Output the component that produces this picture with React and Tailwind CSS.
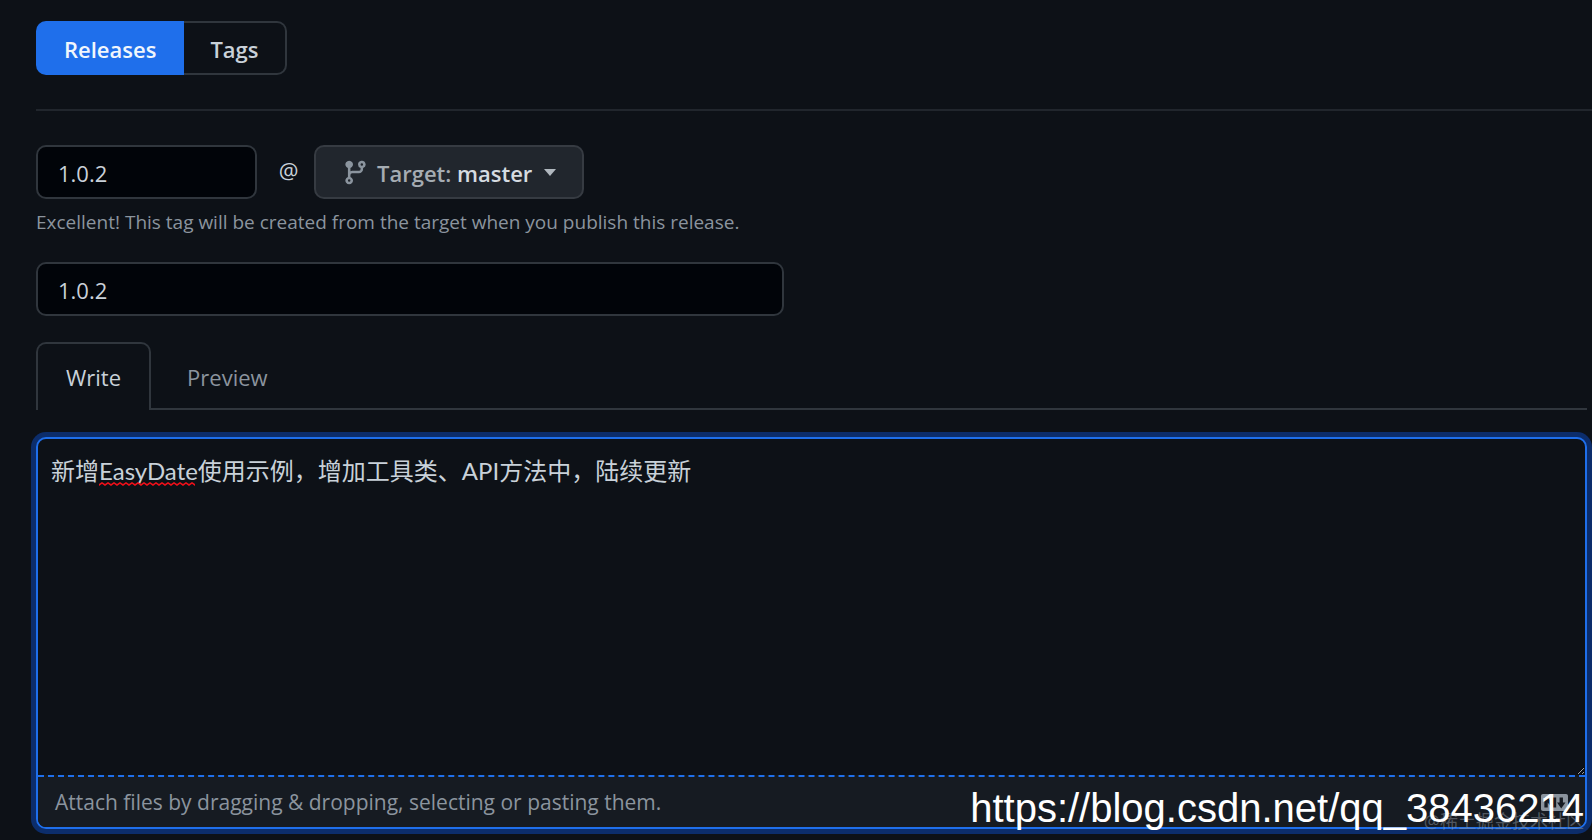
import React, { useState } from 'react';

const BranchIcon = () => (
  <svg viewBox="0 0 16 16" width="27" height="27" fill="currentColor" aria-hidden="true" className="shrink-0">
    <path d="M11.75 2.5a.75.75 0 100 1.5.75.75 0 000-1.5zm-2.25.75a2.25 2.25 0 113 2.122V6A2.5 2.5 0 0110 8.5H6a1 1 0 00-1 1v1.128a2.251 2.251 0 11-1.5 0V5.372a2.25 2.25 0 111.5 0v1.836A2.492 2.492 0 016 7h4a1 1 0 001-1v-.628A2.25 2.25 0 019.5 3.25zM4.25 12a.75.75 0 100 1.5.75.75 0 000-1.5zM3.5 3.25a.75.75 0 111.5 0 .75.75 0 01-1.5 0z" />
  </svg>
);

const MarkdownIcon = () => (
  <svg viewBox="0 3 16 10" width="27" height="17" fill="currentColor" aria-hidden="true">
    <path fillRule="evenodd" d="M14.85 3H1.15C.52 3 0 3.52 0 4.15v7.69C0 12.48.52 13 1.15 13h13.69c.64 0 1.15-.52 1.15-1.15v-7.7C16 3.52 15.48 3 14.85 3zM9 11H7V8L5.5 9.92 4 8v3H2V5h2l1.5 2L7 5h2v6zm2.99.5L9.5 8H11V5h2v3h1.5l-2.51 3.5z" />
  </svg>
);

// Spell-check mark under "EasyDate"
const Squiggle = () => (
  <svg width="96" height="4" fill="none" stroke="#f00f19" strokeWidth="1.5" aria-hidden="true" className="absolute top-[43px] left-[61px] pointer-events-none">
    <defs>
      <pattern id="wave" width="6" height="4" patternUnits="userSpaceOnUse">
        <path d="M-1.5 2 L0 3 L3 1 L6 3 L7.5 2" />
      </pattern>
    </defs>
    <rect width="96" height="4" fill="url(#wave)" stroke="none" />
  </svg>
);

const App = () => {
  const [tag, setTag] = useState('1.0.2');
  const [title, setTitle] = useState('1.0.2');
  const [body, setBody] = useState('新增EasyDate使用示例，增加工具类、API方法中，陆续更新');

  return (
    <div className="min-h-screen bg-[#0d1117] text-[#c9d1d9] pt-[21px] pl-9 font-['Open_Sans','Noto_Sans_CJK_SC',sans-serif] text-[22px] leading-[34px] overflow-hidden">
      <nav className="flex font-semibold">
        <a href="#releases" className="h-[54px] px-7 pt-0.5 flex items-center rounded-l-[10px] bg-[#1f6feb] text-[#f0f6fc]">Releases</a>
        <a href="#tags" className="h-[54px] px-[26px] pt-0.5 flex items-center rounded-r-[10px] border-2 border-l-0 border-[#30363d]">Tags</a>
      </nav>

      <form onSubmit={(e) => e.preventDefault()} className="mt-[34px] pt-[34px] border-t-2 border-[#21262d]">
        <div className="flex items-center">
          <input
            type="text"
            aria-label="Tag version"
            value={tag}
            onChange={(e) => setTag(e.target.value)}
            className="w-[221px] h-[54px] px-5 pt-0.5 rounded-[10px] border-2 border-[#30363d] bg-[#010409] focus:outline-none"
          />
          <span className="w-[57px] pl-1.5 pb-1 text-center">@</span>
          <button type="button" className="h-[54px] px-[26px] flex items-center gap-2 rounded-[10px] border-2 border-[#363b42] bg-[#21262d] text-[#8b949e] font-semibold">
            <BranchIcon />
            <span className="pt-0.5 text-[#a5acb3]">Target: <span className="text-[#d5dbe1]">master</span></span>
            <span className="ml-1 border-x-[6px] border-x-transparent border-t-[7px] border-t-[#b1b8bf]" />
          </button>
        </div>
        <p className="mt-[6px] text-[19px] leading-[34px] text-[#8b949e]">Excellent! This tag will be created from the target when you publish this release.</p>

        <input
          type="text"
          aria-label="Release title"
          value={title}
          onChange={(e) => setTitle(e.target.value)}
          className="mt-[23px] block w-[748px] max-w-full h-[54px] px-5 pt-0.5 rounded-[10px] border-2 border-[#30363d] bg-[#010409] focus:outline-none"
        />

        <div className="mr-[5px]">
          <div className="mt-[26px] flex">
            <button type="button" className="h-[68px] px-7 rounded-t-[10px] border-2 border-b-0 border-[#30363d]">Write</button>
            <div className="flex-1 border-b-2 border-[#30363d]">
              <button type="button" className="h-[66px] px-9 pt-[3px] text-[#8b949e]">Preview</button>
            </div>
          </div>

          <div className="relative mt-[27px] rounded-[10px] border-2 border-[#1f6feb] ring-[5px] ring-[#0c2d6b] bg-[#0d1117]">
            <textarea
              aria-label="Describe this release"
              spellCheck="false"
              value={body}
              onChange={(e) => setBody(e.target.value)}
              className="block w-full h-[336px] px-[13px] py-[15px] resize-y bg-transparent text-2xl leading-[34px] font-['Lato','Noto_Sans_CJK_SC',sans-serif] focus:outline-none [color-scheme:dark]"
            />
            <Squiggle />
            <div className="h-[52px] px-[17px] flex items-center justify-between rounded-b-lg border-t-2 border-dashed border-[#1f6feb] bg-[#161b22] text-[21px] text-[#8b949e]">
              <span>Attach files by dragging &amp; dropping, selecting or pasting them.</span>
              <MarkdownIcon />
            </div>
            <div className="absolute right-px bottom-[-6px] text-lg leading-6 text-[#8b949e]/50 pointer-events-none whitespace-nowrap">@稀土掘金技术社区</div>
            <div className="absolute right-px bottom-[-4px] font-['Liberation_Sans',Arial,sans-serif] text-[40px] leading-[46px] text-white pointer-events-none whitespace-nowrap">https://blog.csdn.net/qq_38436214</div>
          </div>
        </div>
      </form>
    </div>
  );
};

export default App;
